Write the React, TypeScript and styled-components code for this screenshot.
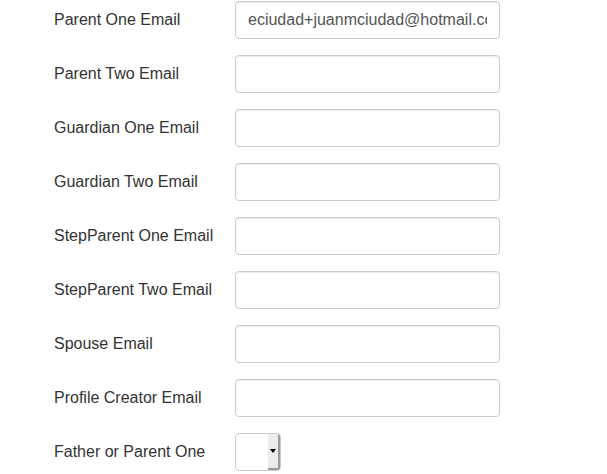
import React from "react";
import styled, { createGlobalStyle } from "styled-components";

const Global = createGlobalStyle`
  html, body { margin: 0; padding: 0; background: #fff; }
  body { font-family: "Liberation Sans", Arial, sans-serif; color: #333; }
`;

const Form = styled.div`
  display: flex;
  flex-direction: column;
  gap: 16px;
  padding: 1px 0 0 54px;
`;

const Row = styled.div`
  display: grid;
  grid-template-columns: 181px 265px;
  align-items: center;
  height: 38px;
`;

const Label = styled.label`
  font-size: 16px;
  line-height: 20px;
  color: #333;
  white-space: nowrap;
`;

const Input = styled.input`
  box-sizing: border-box;
  width: 265px;
  height: 38px;
  border: 1px solid #ccc;
  border-radius: 4px;
  padding: 0 12px;
  font-family: "Liberation Sans", Arial, sans-serif;
  font-size: 16px;
  color: #555;
  background: #fff;
  box-shadow: inset 0 1px 1px rgba(0, 0, 0, 0.075);
  outline: none;
`;

const Select = styled.div`
  box-sizing: border-box;
  width: 46px;
  height: 38px;
  border: 1px solid #ccc;
  border-radius: 4px;
  display: flex;
  justify-content: flex-end;
  overflow: hidden;
  background: #fff;
`;

const Arrow = styled.div`
  width: 12px;
  height: 100%;
  background: #ececec;
  border-right: 2px solid #999;
  border-bottom: 2px solid #999;
  box-sizing: border-box;
  display: flex;
  align-items: center;
  justify-content: center;
  &::after {
    content: "";
    border-left: 3px solid transparent;
    border-right: 3px solid transparent;
    border-top: 4px solid #000;
  }
`;

const emails = [
  ["Parent One Email", "eciudad+juanmciudad@hotmail.com"],
  ["Parent Two Email", ""],
  ["Guardian One Email", ""],
  ["Guardian Two Email", ""],
  ["StepParent One Email", ""],
  ["StepParent Two Email", ""],
  ["Spouse Email", ""],
  ["Profile Creator Email", ""],
];

export default function App() {
  return (
    <>
      <Global />
      <Form>
        {emails.map(([label, value]) => (
          <Row key={label}>
            <Label>{label}</Label>
            <Input type="text" defaultValue={value} readOnly />
          </Row>
        ))}
        <Row>
          <Label>Father or Parent One</Label>
          <Select>
            <Arrow />
          </Select>
        </Row>
      </Form>
    </>
  );
}
